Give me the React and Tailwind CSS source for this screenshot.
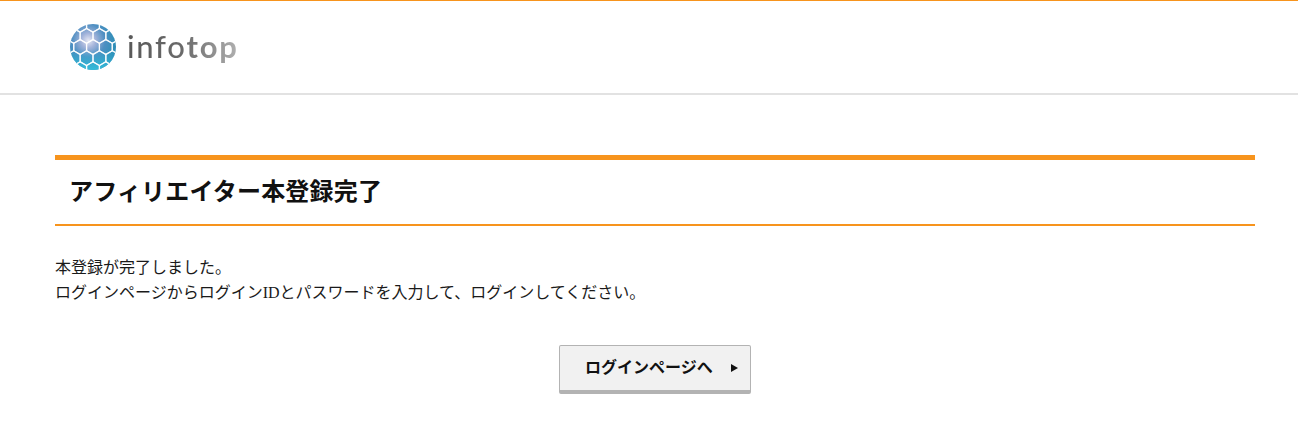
const hexes = [];
for (let row = -3; row <= 3; row++) {
  for (let col = -3; col <= 3; col++) {
    hexes.push({ x: 24 + col * 13.4 + (row % 2 ? 6.7 : 0), y: 24 + row * 11.6 });
  }
}

const hexPoints = (cx, cy, r) =>
  [0, 1, 2, 3, 4, 5]
    .map((i) => {
      const a = (Math.PI / 3) * i + Math.PI / 6;
      return `${cx + r * Math.cos(a)},${cy + r * Math.sin(a)}`;
    })
    .join(' ');

const Logo = () => (
  <div className="flex items-center gap-[11px]">
    <svg width="46" height="46" viewBox="0 0 48 48">
      <defs>
        <radialGradient id="ball" cx="0.4" cy="0.36" r="0.72">
          <stop offset="0" stopColor="#e6e8f4" />
          <stop offset="0.22" stopColor="#a3b3da" />
          <stop offset="0.5" stopColor="#4e8fc2" />
          <stop offset="0.8" stopColor="#2f8fb8" />
          <stop offset="1" stopColor="#2a7fae" />
        </radialGradient>
        <linearGradient id="ballBottom" x1="0" y1="0.55" x2="0" y2="1">
          <stop offset="0" stopColor="#35b4d6" stopOpacity="0" />
          <stop offset="1" stopColor="#35c0de" stopOpacity="0.95" />
        </linearGradient>
        <clipPath id="ballClip">
          <circle cx="24" cy="24" r="24" />
        </clipPath>
      </defs>
      <circle cx="24" cy="24" r="24" fill="url(#ball)" />
      <circle cx="24" cy="24" r="24" fill="url(#ballBottom)" />
      <g clipPath="url(#ballClip)" fill="none" stroke="#ffffff" strokeOpacity="0.85" strokeWidth="1.3">
        {hexes.map((h, i) => (
          <polygon key={i} points={hexPoints(h.x, h.y, 7.75)} />
        ))}
      </g>
    </svg>
    <span className="bg-gradient-to-r from-[#595959] via-[#6a6a6a] to-[#b0b0b0] bg-clip-text font-['Lato',sans-serif] text-[31px] font-medium leading-[38px] tracking-[1.7px] text-transparent -mt-[2px]">
      info<span className="font-bold">top</span>
    </span>
  </div>
);

export default function App() {
  return (
    <div className="min-h-[441px] bg-white font-['Noto_Sans_CJK_JP','Liberation_Sans',sans-serif] text-[#1a1a1a]">
      <header className="h-[95px] border-t border-[#f7941d] border-b-2 border-b-[#e2e2e2] pl-[70px] pt-[23px]">
        <Logo />
      </header>

      <main className="ml-[55px] mr-[43px] mt-[60px]">
        <h1 className="h-[71px] border-t-[5px] border-b-2 border-[#f7941d] pl-[14px] pb-[4px] flex items-center text-[24px] font-bold leading-none tracking-[0.2px] text-[#111111]">
          アフィリエイター本登録完了
        </h1>

        <p className="mt-[28px] text-[16px] leading-[25px]">
          本登録が完了しました。
          <br />
          ログインページからログイン<span className="font-['Liberation_Serif',serif]">ID</span>とパスワードを入力して、ログインしてください。
        </p>

        <div className="mt-[40px] flex justify-center">
          <button className="relative flex h-[49px] w-[192px] items-center rounded-[2px] border border-[#b3b3b3] border-b-4 bg-[#f1f1f1] pl-[25px] pb-[4px] text-[16px] font-bold text-[#111111]">
            ログインページへ
            <span className="absolute right-[12px] top-1/2 -translate-y-1/2 h-0 w-0 border-y-[4px] border-l-[7px] border-y-transparent border-l-[#111111]" />
          </button>
        </div>
      </main>
    </div>
  );
}
